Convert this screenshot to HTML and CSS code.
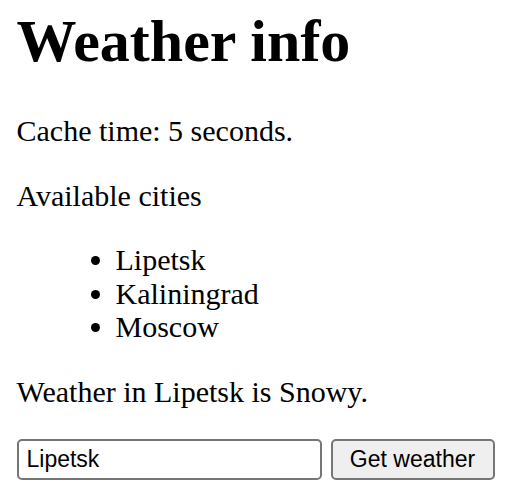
FILE: index.html
```html
<!DOCTYPE html>
<html>
<head>
<meta charset="utf-8">
<title>Weather info</title>
<link rel="stylesheet" href="styles.css">
</head>
<body>
<h1 class="title">Weather info</h1>
<p class="text">Cache time: 5 seconds.</p>
<p class="text">Available cities</p>
<ul class="cities">
<li>Lipetsk</li>
<li>Kaliningrad</li>
<li>Moscow</li>
</ul>
<p class="text">Weather in Lipetsk is Snowy.</p>
<form class="form">
<input class="city-input" type="text" value="Lipetsk">
<button class="submit" type="button">Get weather</button>
</form>
</body>
</html>
```

FILE: styles.css
```css
html, body {
  margin: 0;
  background: #ffffff;
}
body {
  padding: 7px 16px 0 16.5px;
  font-family: "Liberation Serif", "Times New Roman", serif;
  font-size: 30px;
  line-height: 33.35px;
  color: #000000;
}
.title {
  font-size: 60px;
  line-height: 69px;
  font-weight: bold;
  margin: 0 0 38px 0;
}
.text {
  margin: 0 0 31.3px 0;
}
.cities {
  margin: 0 0 31.3px 0;
  padding-left: 99px;
}
.form {
  display: flex;
  gap: 9px;
  margin: 0;
}
.city-input {
  box-sizing: border-box;
  width: 305px;
  height: 41px;
  margin: 0;
  padding: 0 8px;
  border: 2px solid #767676;
  border-radius: 5px;
  font-family: "Liberation Sans", Arial, sans-serif;
  font-size: 23px;
  color: #000000;
  background: #ffffff;
}
.submit {
  box-sizing: border-box;
  width: 164px;
  height: 41px;
  margin: 0;
  padding: 0;
  border: 2px solid #767676;
  border-radius: 5px;
  background: #efefef;
  font-family: "Liberation Sans", Arial, sans-serif;
  font-size: 23px;
  color: #000000;
}
```
